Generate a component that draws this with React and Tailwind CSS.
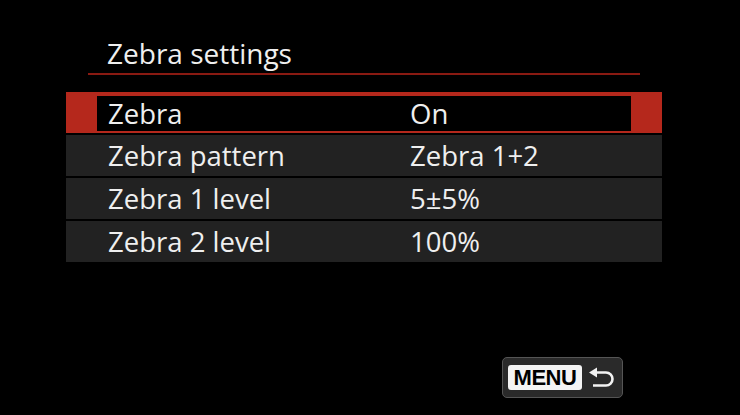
import React from "react";

const rows = [
  ["Zebra pattern", "Zebra 1+2"],
  ["Zebra 1 level", "5±5%"],
  ["Zebra 2 level", "100%"],
];

function ReturnIcon() {
  return (
    <svg width="28" height="22" viewBox="0 0 28 22" className="block">
      <path d="M1 5.5 L9 0.5 L9 10.5 Z" fill="#f2f2f2" />
      <path
        d="M8 5.5 H18 A6.5 6.5 0 0 1 18 18.5 H5"
        fill="none"
        stroke="#f2f2f2"
        strokeWidth="2.6"
      />
    </svg>
  );
}

export default function App() {
  return (
    <div
      className="w-[740px] h-[415px] bg-black text-[#efefef] flex flex-col overflow-hidden font-medium"
      style={{ fontFamily: '"Open Sans", "Noto Sans", sans-serif' }}
    >
      <div className="ml-[88px] w-[552px] mt-[33px] h-[42px] border-b-2 border-[#8a1a12] pl-[19px] text-[28px] leading-[40px]">
        Zebra settings
      </div>
      <div className="ml-[66px] w-[596px] mt-[17px] flex flex-col gap-[2px]">
        <div className="h-[41px] bg-[#b5281c] pl-[31px] pr-[31px] pt-[4px] pb-[2px]">
          <div className="h-full bg-black flex items-center text-[27.5px] leading-[34px]">
            <span className="w-[313px] pl-[11px]">Zebra</span>
            <span>On</span>
          </div>
        </div>
        {rows.map(([k, v]) => (
          <div key={k} className="h-[41px] bg-[#222222] flex items-center text-[27.5px] leading-[34px]">
            <span className="w-[344px] pl-[42px]">{k}</span>
            <span>{v}</span>
          </div>
        ))}
      </div>
      <div className="flex-1 flex items-end justify-end pr-[117px] pb-[17px]">
        <div className="w-[121px] h-[41px] rounded-[5px] bg-[#2a2a2a] border border-[#555555] flex items-center pl-[5px] gap-[6px]">
          <div
            className="h-[25px] w-[74px] bg-[#f4f4f4] rounded-[3px] flex items-center justify-center text-black font-bold text-[22px] tracking-[-0.5px] leading-none"
            style={{ fontFamily: '"Liberation Sans", Arial, sans-serif' }}
          >
            MENU
          </div>
          <ReturnIcon />
        </div>
      </div>
    </div>
  );
}
